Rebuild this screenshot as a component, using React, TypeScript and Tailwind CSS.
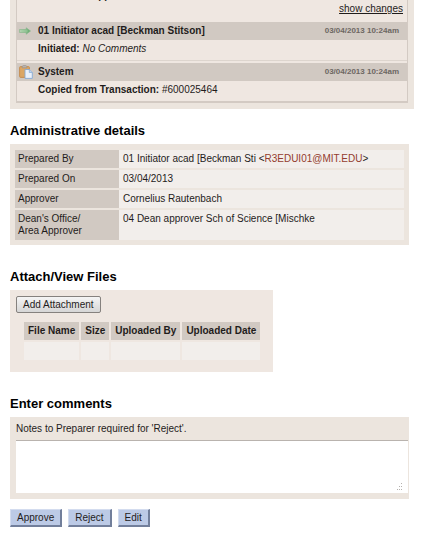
import { ReactNode } from "react";

const historyEntries = [
	{
		icon: "arrow",
		author: "01 Initiator acad [Beckman Stitson]",
		date: "03/04/2013 10:24am",
		body: <><b>Initiated:</b> <i>No Comments</i></>,
	},
	{
		icon: "clipboard",
		author: "System",
		date: "03/04/2013 10:24am",
		body: <><b>Copied from Transaction:</b> #600025464</>,
	},
];

const fileColumns = ["File Name", "Size", "Uploaded By", "Uploaded Date"];

const ArrowIcon = () => (
	<svg width="12" height="8" viewBox="0 0 12 8" aria-hidden="true">
		<defs>
			<linearGradient id="arrowFill" x1="0" x2="1" y1="0" y2="0">
				<stop offset="0" stopColor="#b9d3b5" />
				<stop offset="1" stopColor="#63a86c" />
			</linearGradient>
		</defs>
		<path d="M0.5 2.5H7.2V0.8L11.5 4L7.2 7.2V5.5H0.5Z" fill="url(#arrowFill)" stroke="#83b688" strokeWidth="0.6" />
		<path d="M2 4H8.5" stroke="#a5d3a6" strokeWidth="0.8" />
	</svg>
);

const ClipboardIcon = () => (
	<svg width="14" height="14" viewBox="0 0 14 14" aria-hidden="true">
		<rect x="0.6" y="1.6" width="9.8" height="10.8" rx="1" fill="#dba766" stroke="#c48a4d" strokeWidth="0.9" />
		<path d="M3 2.8V1.6L4.3 0.5H6.8L8 1.6V2.8Z" fill="#b9b3ad" stroke="#958c85" strokeWidth="0.6" />
		<path d="M6 4.5H10.3L13.3 7.5V13.4H6Z" fill="#e9f1fb" stroke="#86a9d2" strokeWidth="0.9" />
		<path d="M10.3 4.5V7.5H13.3" fill="#bcd3ee" stroke="#86a9d2" strokeWidth="0.7" />
	</svg>
);

// dotted corner handle of the comments box
const ResizeGrip = () => (
	<svg width="8" height="8" viewBox="0 0 8 8" className="absolute right-1 bottom-[2px] pointer-events-none" aria-hidden="true">
		<path d="M5 0h1v1h-1zM3 3h1v1h-1zM5 3h1v1h-1zM1 6h1v1h-1zM3 6h1v1h-1zM5 6h1v1h-1z" fill="#b5b1ae" />
	</svg>
);

const SectionTitle = ({ children }: { children: ReactNode }) => (
	<h2 className="text-[13px] leading-4 font-bold text-black mb-[5px]">{children}</h2>
);

const DetailRow = ({ label, children }: { label: ReactNode; children: ReactNode }) => (
	<tr className="align-top">
		<th scope="row" className="w-[104px] bg-[#d1c9c2] p-[3px] text-left font-normal">{label}</th>
		<td className="bg-[#f2eeeb] px-1 py-[3px]">{children}</td>
	</tr>
);

const ActionButton = ({ children }: { children: ReactNode }) => (
	<button className="h-[18px] px-[6px] bg-[#bccae6] border border-r-2 border-b-2 border-t-[#d3dcef] border-l-[#d3dcef] border-r-[#727f9b] border-b-[#727f9b] leading-3 cursor-pointer">
		{children}
	</button>
);

const App = () => {
	return (
		<main className="pl-[10px] pr-[13px] font-['Liberation_Sans',Arial,sans-serif] text-[10px] leading-3 text-[#1f1c1b]">
			{/* History */}
			<section className="bg-[#ece5de] px-[6px] pb-[6px]">
				<div className="border-x border-b-2 border-[#d3cac3] bg-[#efe7e1]">
					<div className="h-[22px] overflow-hidden flex justify-between items-start pl-[74px] pr-1">
						<b className="-mt-[10px]">Approver</b>
						<a href="#changes" className="mt-[3px] underline">show changes</a>
					</div>
					{historyEntries.map((entry, index) => (
						<div key={index} className={index > 0 ? "border-t border-[#ddd5ce] pt-[2px]" : ""}>
							<div className="h-[18px] bg-[#d1c9c2] flex items-center pl-[2px] pr-2">
								<span className="w-[19px] flex">
									{entry.icon === "arrow" ? <ArrowIcon /> : <ClipboardIcon />}
								</span>
								<b className="grow">{entry.author}</b>
								<b className="text-[8px] text-[#6d6763]">{entry.date}</b>
							</div>
							<p className="pl-[21px] pt-[3px] pb-[5px]">{entry.body}</p>
						</div>
					))}
				</div>
			</section>

			{/* Administrative details */}
			<section className="mt-[14px] mr-[5px]">
				<SectionTitle>Administrative details</SectionTitle>
				<div className="bg-[#ece5de] px-[5px] pt-1 pb-[3px]">
					<table className="w-full border-separate border-spacing-x-0 border-spacing-y-[2px]">
						<tbody>
							<DetailRow label="Prepared By">
								01 Initiator acad [Beckman Sti &lt;<a href="mailto:R3EDUI01@MIT.EDU" className="text-[#943c2e]">R3EDUI01@MIT.EDU</a>&gt;
							</DetailRow>
							<DetailRow label="Prepared On">03/04/2013</DetailRow>
							<DetailRow label="Approver">Cornelius Rautenbach</DetailRow>
							<DetailRow label={<>Dean's Office/<br />Area Approver</>}>04 Dean approver Sch of Science [Mischke</DetailRow>
						</tbody>
					</table>
				</div>
			</section>

			{/* Attachments */}
			<section className="mt-6">
				<SectionTitle>Attach/View Files</SectionTitle>
				<div className="w-fit bg-[#efe7e1] pl-[6px] pr-[11px] pt-[6px] pb-[10px]">
					<button className="h-[17px] px-[6px] rounded-xs border border-[#85817e] bg-linear-to-b from-[#f5f5f5] to-[#d6d6d6] leading-3 cursor-pointer">
						Add Attachment
					</button>
					<table className="ml-[6px] mt-[7px] border-separate border-spacing-[2px]">
						<thead>
							<tr>
								{fileColumns.map((column) => (
									<th key={column} className="h-[18px] bg-[#d1c9c2] px-1 font-bold">{column}</th>
								))}
							</tr>
						</thead>
						<tbody>
							<tr>
								{fileColumns.map((column) => (
									<td key={column} className="h-[18px] bg-[#f2eeeb]"></td>
								))}
							</tr>
						</tbody>
					</table>
				</div>
			</section>

			{/* Comments */}
			<section className="mt-6 mr-[5px]">
				<SectionTitle>Enter comments</SectionTitle>
				<div className="bg-[#ece5de] pl-[6px] pr-px pt-[6px] pb-[6px]">
					<label htmlFor="comments" className="block mb-[5px]">Notes to Preparer required for 'Reject'.</label>
					<div className="relative">
						<textarea id="comments" className="block w-full h-[53px] bg-white border-t border-[#b9b3ae] p-1 resize-none" />
						<ResizeGrip />
					</div>
				</div>
			</section>

			<div className="mt-[10px] pb-3 flex gap-[6px]">
				<ActionButton>Approve</ActionButton>
				<ActionButton>Reject</ActionButton>
				<ActionButton>Edit</ActionButton>
			</div>
		</main>
	);
};

export default App;
